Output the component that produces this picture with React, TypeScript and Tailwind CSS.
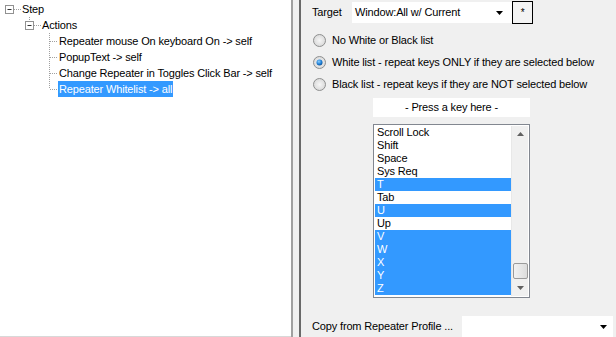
import React from 'react';

const FONT = { fontFamily: '"Liberation Sans", Arial, sans-serif' };

const keys = [
  { name: 'Scroll Lock', sel: false },
  { name: 'Shift', sel: false },
  { name: 'Space', sel: false },
  { name: 'Sys Req', sel: false },
  { name: 'T', sel: true },
  { name: 'Tab', sel: false },
  { name: 'U', sel: true },
  { name: 'Up', sel: false },
  { name: 'V', sel: true },
  { name: 'W', sel: true },
  { name: 'X', sel: true },
  { name: 'Y', sel: true },
  { name: 'Z', sel: true },
];

const actions = [
  'Repeater mouse On keyboard On -> self',
  'PopupText -> self',
  'Change Repeater in Toggles Click Bar -> self',
  'Repeater Whitelist -> all',
];

// expand/collapse box with dotted connector to the label
function MinusBox({ lineAbove }: { lineAbove?: boolean }) {
  return (
    <svg width="17" height="16" className="shrink-0">
      {lineAbove && <line x1="4.5" y1="0" x2="4.5" y2="4" stroke="#a0a0a0" strokeDasharray="1 1" />}
      <rect x="0.5" y="4.5" width="8" height="8" fill="#fff" stroke="#919191" />
      <line x1="2.5" y1="8.5" x2="6.5" y2="8.5" stroke="#333" />
      <line x1="9" y1="8.5" x2="17" y2="8.5" stroke="#a0a0a0" strokeDasharray="1 1" />
    </svg>
  );
}

function Branch({ last }: { last: boolean }) {
  return (
    <svg width="14" height="16" className="shrink-0">
      <line x1="4.5" y1="0" x2="4.5" y2={last ? 8 : 16} stroke="#a0a0a0" strokeDasharray="1 1" />
      <line x1="5" y1="8.5" x2="13" y2="8.5" stroke="#a0a0a0" strokeDasharray="1 1" />
    </svg>
  );
}

function Radio({ checked }: { checked?: boolean }) {
  return (
    <svg width="13" height="13" className="shrink-0">
      <defs>
        <radialGradient id="rg" cx="0.5" cy="0.5" r="0.6">
          <stop offset="0" stopColor="#f6f6f6" />
          <stop offset="1" stopColor="#d4d4d4" />
        </radialGradient>
        <radialGradient id="dot" cx="0.4" cy="0.35" r="0.7">
          <stop offset="0" stopColor="#8ed0ff" />
          <stop offset="0.6" stopColor="#1f7fd6" />
          <stop offset="1" stopColor="#0d4f8f" />
        </radialGradient>
      </defs>
      <circle cx="6.5" cy="6.5" r="6" fill="url(#rg)" stroke="#8e8f8f" />
      {checked && <circle cx="6.5" cy="6.5" r="3" fill="url(#dot)" />}
    </svg>
  );
}

function Caret() {
  return (
    <svg width="7" height="4" className="shrink-0">
      <polygon points="0,0 7,0 3.5,4" fill="#000" />
    </svg>
  );
}

function ScrollArrow({ up }: { up?: boolean }) {
  return (
    <svg width="7" height="4">
      <polygon points={up ? '0,4 7,4 3.5,0' : '0,0 7,0 3.5,4'} fill="#606060" />
    </svg>
  );
}

export default function App() {
  return (
    <div
      className="w-[616px] h-[337px] flex overflow-hidden text-[11px] tracking-[-0.15px] text-black bg-[#f0f0f0]"
      style={FONT}
    >
      {/* tree */}
      <div className="w-[291px] shrink-0 bg-white pt-px border-b border-[#d8d8d8]">
        <div className="flex items-center h-4 pl-[5px]">
          <MinusBox />
          <span className="leading-4">Step</span>
        </div>
        <div className="flex items-center h-4 pl-[25px]">
          <MinusBox lineAbove />
          <span className="leading-4">Actions</span>
        </div>
        {actions.map((a, i) => {
          const selected = i === actions.length - 1;
          return (
            <div key={a} className="flex items-center h-4 pl-[45px]">
              <Branch last={selected} />
              <span
                className={
                  selected
                    ? 'leading-4 h-4 px-px bg-[#3399ff] text-white -ml-px'
                    : 'leading-4 h-4 px-px -ml-px'
                }
              >
                {a}
              </span>
            </div>
          );
        })}
      </div>

      {/* splitter */}
      <div className="w-[10px] shrink-0 flex">
        <div className="w-[2px] bg-[#a0a0a0]" />
        <div className="flex-1 bg-[#f0f0f0]" />
        <div className="w-[2px] bg-[#696969]" />
      </div>

      {/* properties */}
      <div className="flex-1 flex flex-col pl-[11px]">
        <div className="flex items-center h-[21px] mt-[2px]">
          <span className="w-[40px]">Target</span>
          <div className="w-[160px] h-[21px] bg-white flex items-center justify-between pl-[3px] pr-[9px]">
            <span>Window:All w/ Current</span>
            <Caret />
          </div>
          <div className="w-[21px] h-[23px] -mt-px border border-black bg-[#f4f4f4] flex items-center justify-center text-[10px]">
            *
          </div>
        </div>

        <div className="mt-[6px] flex flex-col">
          <div className="flex items-center h-[22px] gap-[6px] pl-px">
            <Radio />
            <span>No White or Black list</span>
          </div>
          <div className="flex items-center h-[22px] gap-[6px] pl-px">
            <Radio checked />
            <span>White list - repeat keys ONLY if they are selected below</span>
          </div>
          <div className="flex items-center h-[22px] gap-[6px] pl-px">
            <Radio />
            <span>Black list - repeat keys if they are NOT selected below</span>
          </div>
        </div>

        <div className="mt-[3px] ml-[61px] w-[157px] h-[19px] bg-white flex items-center justify-center">
          - Press a key here -
        </div>

        <div className="mt-[7px] ml-[61px] w-[157px] h-[175px] bg-white border border-[#828790] flex p-px">
          <div className="flex-1 flex flex-col">
            {keys.map((k) => (
              <div
                key={k.name}
                className={
                  k.sel
                    ? 'h-[13px] leading-[13px] pl-[2px] bg-[#3399ff] text-white'
                    : 'h-[13px] leading-[13px] pl-[2px]'
                }
              >
                {k.name}
              </div>
            ))}
          </div>
          <div className="w-[17px] shrink-0 bg-[#f0f0f0] border-l border-[#e8e8e8] flex flex-col items-center">
            <div className="h-[17px] flex items-center justify-center">
              <ScrollArrow up />
            </div>
            <div className="flex-1" />
            <div className="w-[15px] h-[16px] rounded-[2px] border border-[#9a9a9a] bg-gradient-to-r from-[#f2f2f2] to-[#dcdcdc]" />
            <div className="h-[17px] flex items-center justify-center">
              <ScrollArrow />
            </div>
          </div>
        </div>

        <div className="mt-[18px] flex items-center h-[21px]">
          <span className="w-[150px]">Copy from Repeater Profile ...</span>
          <div className="w-[151px] h-[21px] bg-white flex items-center justify-end pr-[6px]">
            <Caret />
          </div>
        </div>
      </div>
    </div>
  );
}
